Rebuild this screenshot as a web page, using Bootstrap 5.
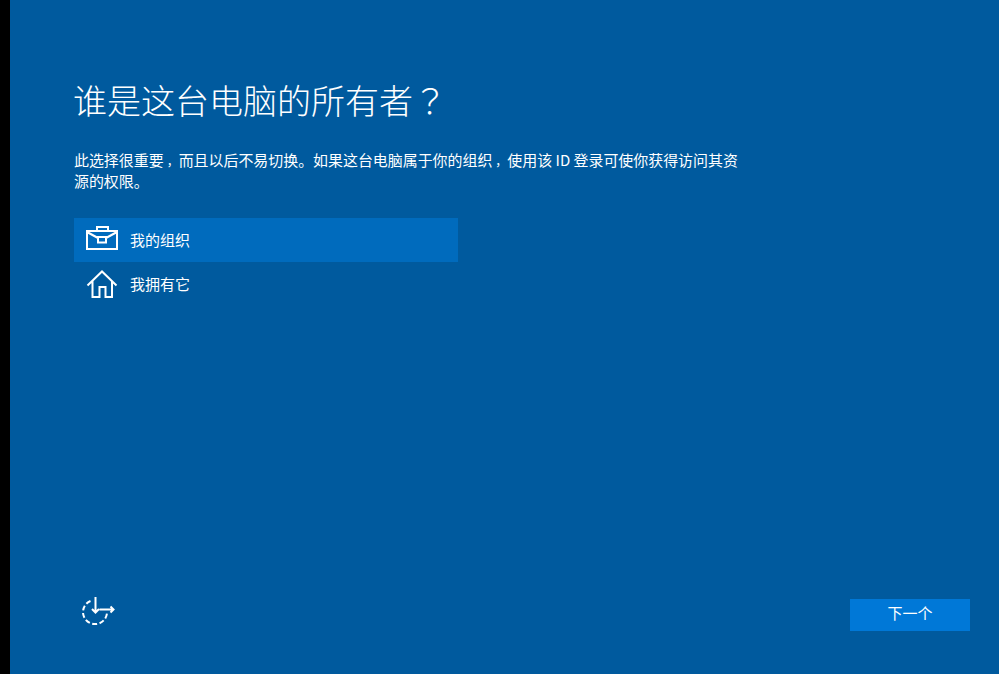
<!DOCTYPE html>
<html lang="zh-CN">
<head>
<meta charset="utf-8">
<title>谁是这台电脑的所有者？</title>
<link href="https://cdn.jsdelivr.net/npm/bootstrap@5.3.0/dist/css/bootstrap.min.css" rel="stylesheet">
<style>
html,body{height:100%;margin:0}
body{background:#000;font-family:"Noto Sans CJK SC","Liberation Sans",sans-serif;color:#fff;overflow:hidden}
.stage{height:674px}
.edge{width:10px;background:#000;flex:none}
.pane{background:#005a9e;padding:0 29px 43px 64px}
.ttl{font-size:34px;font-weight:300;line-height:46px;margin:77px 0 0;margin-left:-1px}
.desc{font-size:14.95px;line-height:21px;width:672px;margin:26px 0 0}
.punct{font-family:"Noto Sans CJK TC",sans-serif}
.cma{font-family:"Noto Sans CJK KR",sans-serif;font-size:12px;line-height:1;margin-left:3px}
.opts{width:384px;margin-top:27px}
.opt{height:44px;padding-left:12px;gap:12px;font-size:15px;color:#fff}
.opt.sel{background:#006bbd}
.opt svg{flex:none}
.foot{margin-top:auto;padding-left:7px}
.nxt{width:120px;height:32px;background:#0078d7;color:#fff;border:0;border-radius:0;font-size:15px;padding:0 0 5px;line-height:26px}
</style>
</head>
<body>
<div class="stage d-flex">
  <div class="edge"></div>
  <main class="pane flex-grow-1 d-flex flex-column">
    <h1 class="ttl">谁是这台电脑的所有者<span class="punct" lang="zh-TW">？</span></h1>
    <p class="desc">此选择很重要<span class="cma" lang="ko">，</span>而且以后不易切换。如果这台电脑属于你的组织<span class="cma" lang="ko">，</span>使用该 ID 登录可使你获得访问其资<br>源的权限。</p>
    <div class="opts d-flex flex-column">
      <div class="opt sel d-flex align-items-center">
        <svg width="32" height="28" viewBox="0 0 32 28" fill="none" stroke="#fff" stroke-width="2"><path d="M1 5h30v18H1zM11 5V1h11v4M1 6l11 6M31 6l-11 6M12 11h8v5.500h-8z"/></svg>
        <span>我的组织</span>
      </div>
      <div class="opt d-flex align-items-center">
        <svg width="32" height="28" viewBox="0 0 32 28" fill="none" stroke="#fff" stroke-width="2"><path d="M1.500 15.500 16 1.500l14.500 14M6.500 11v16h7V17h6v10h6.500V11"/></svg>
        <span>我拥有它</span>
      </div>
    </div>
    <div class="foot d-flex justify-content-between align-items-end">
      <svg width="34" height="34" viewBox="0 0 34 34" fill="none" stroke="#fff" stroke-width="2"><path d="M9.500 4A12 12 0 1 0 26 16" stroke-dasharray="5 2.500"/><path d="M14.500 0v15.500M11 12l3.500 3.500 3.500-3.500M18.500 12.500h14M29.500 9.500l3 3-3 3"/></svg>
      <button class="btn nxt" type="button">下一个</button>
    </div>
  </main>
</div>
</body>
</html>
